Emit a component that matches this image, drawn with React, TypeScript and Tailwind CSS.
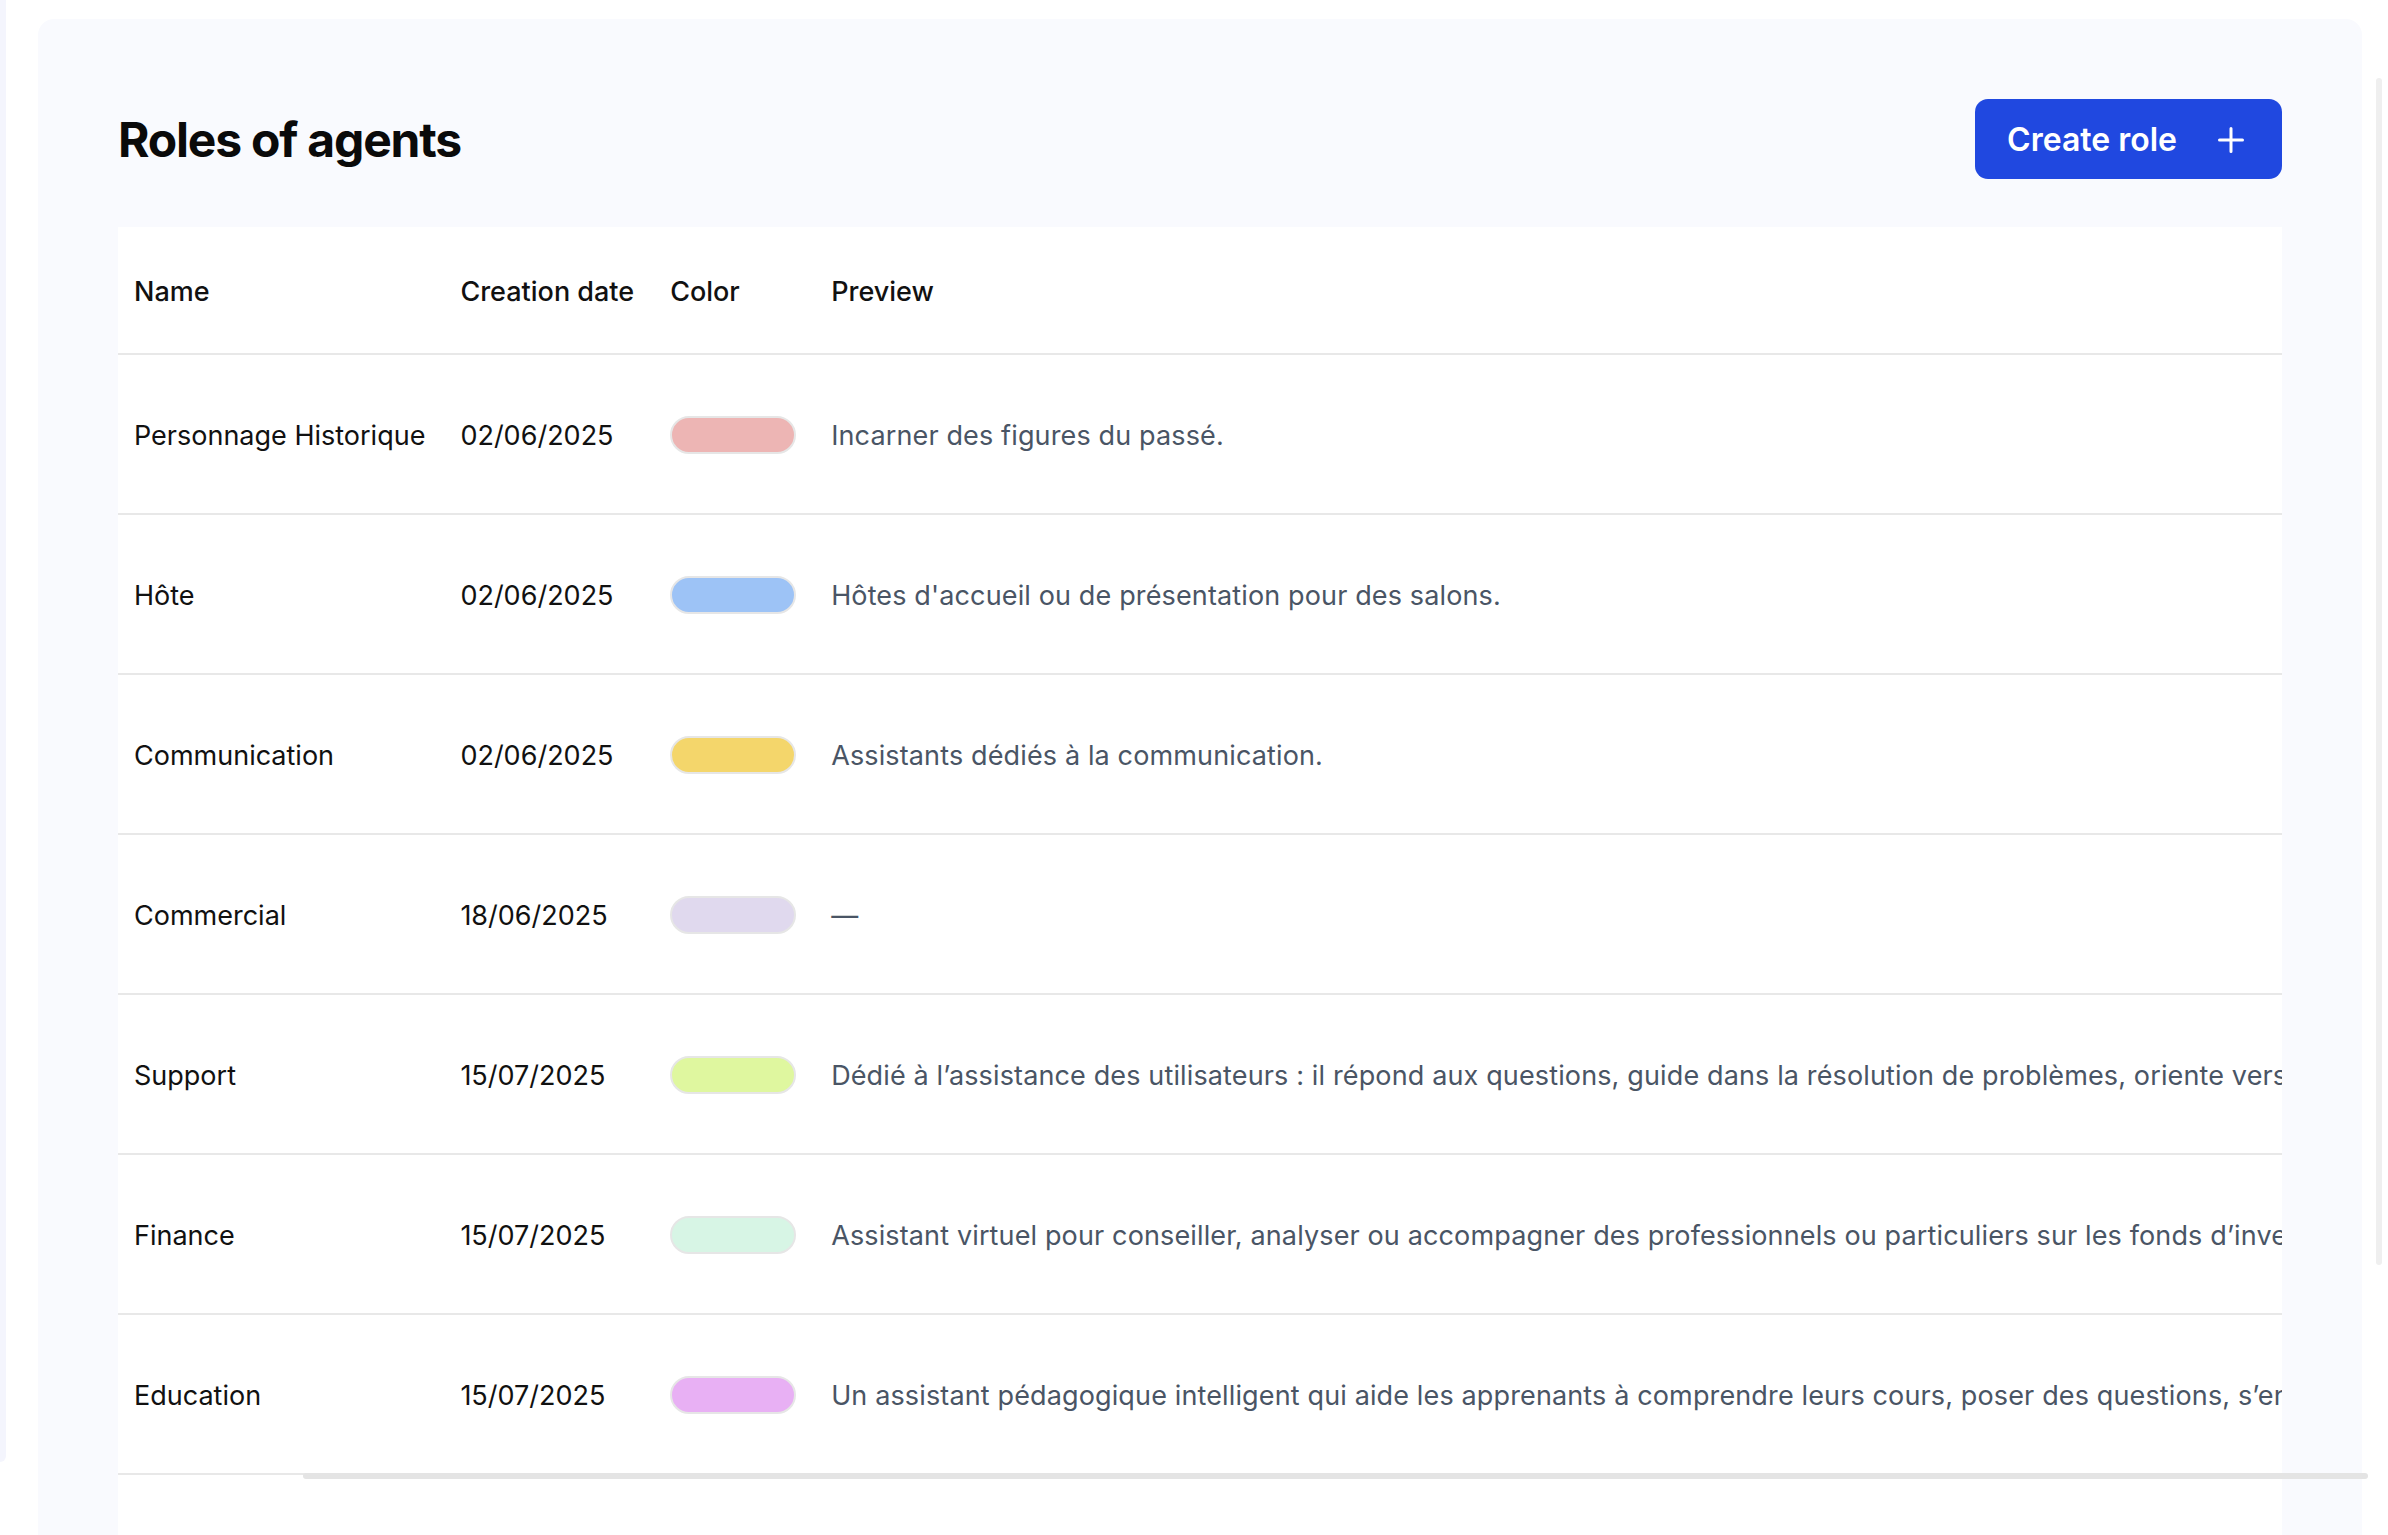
import React from 'react';

interface Role {
  name: string;
  date: string;
  color: string;
  preview: string;
}

const roles: Role[] = [
  { name: 'Personnage Historique', date: '02/06/2025', color: 'bg-[#edb5b4]', preview: 'Incarner des figures du passé.' },
  { name: 'Hôte', date: '02/06/2025', color: 'bg-[#9dc3f6]', preview: "Hôtes d'accueil ou de présentation pour des salons." },
  { name: 'Communication', date: '02/06/2025', color: 'bg-[#f4d66b]', preview: 'Assistants dédiés à la communication.' },
  { name: 'Commercial', date: '18/06/2025', color: 'bg-[#e0d9ee]', preview: '—' },
  {
    name: 'Support',
    date: '15/07/2025',
    color: 'bg-[#dff79f]',
    preview:
      'Dédié à l’assistance des utilisateurs : il répond aux questions, guide dans la résolution de problèmes, oriente vers les bonnes ressources et facilite l’accès aux services.',
  },
  {
    name: 'Finance',
    date: '15/07/2025',
    color: 'bg-[#d7f5e5]',
    preview:
      'Assistant virtuel pour conseiller, analyser ou accompagner des professionnels ou particuliers sur les fonds d’investissement.',
  },
  {
    name: 'Education',
    date: '15/07/2025',
    color: 'bg-[#e8b0f4]',
    preview:
      'Un assistant pédagogique intelligent qui aide les apprenants à comprendre leurs cours, poser des questions, s’entraîner et progresser à leur rythme.',
  },
];

const headers = [
  { label: 'Name', pad: 'pl-4 pr-[19px]' },
  { label: 'Creation date', pad: 'pl-4 pr-[20px]' },
  { label: 'Color', pad: 'pl-4 pr-[19px]' },
  { label: 'Preview', pad: 'px-4' },
];

const PlusIcon = () => (
  <svg width="26" height="26" viewBox="0 0 26 26" fill="none">
    <path d="M13 1.5v23M1.5 13h23" stroke="white" strokeWidth="3" strokeLinecap="round" />
  </svg>
);

export default function App() {
  return (
    <div className="relative flex h-[1535px] overflow-hidden bg-white font-['Inter',sans-serif]">
      {/* sidebar edge */}
      <div className="w-[6px] h-[1462px] shrink-0 bg-[#f4f5fd] rounded-br-[16px]" />

      {/* main panel */}
      <div className="ml-[32px] mt-[19px] w-[2324px] shrink-0 flex flex-col bg-[#f9fafe] rounded-t-[16px] px-[80px] pt-[80px]">
        <div className="flex items-center justify-between h-[80px]">
          <h1 className="pt-[1px] text-[48px] font-bold text-[#0a0a0a] tracking-[-0.025em] leading-none">Roles of agents</h1>
          <button className="flex items-center h-[80px] gap-[41px] pl-[32px] pr-[38px] pt-[2px] rounded-[13px] bg-[#2048e0] text-white text-[32px] font-semibold">
            <span>Create role</span>
            <PlusIcon />
          </button>
        </div>

        <div className="mt-[48px] flex-1 bg-white overflow-hidden">
          <table className="border-separate border-spacing-0 whitespace-nowrap text-[27px] text-left">
            <thead>
              <tr>
                {headers.map((h) => (
                  <th key={h.label} className="p-0 font-medium text-[#111] border-b-2 border-[#e8e8e8]">
                    <div className={`h-[126px] flex items-center pt-[4px] ${h.pad}`}>{h.label}</div>
                  </th>
                ))}
              </tr>
            </thead>
            <tbody>
              {roles.map((r) => (
                <tr key={r.name}>
                  <td className="p-0 border-b-2 border-[#e8e8e8] text-[#111]">
                    <div className="h-[158px] flex items-center pt-[4px] pl-4 pr-[19px]">{r.name}</div>
                  </td>
                  <td className="p-0 border-b-2 border-[#e8e8e8] text-[#111]">
                    <div className="h-[158px] flex items-center pt-[4px] pl-4 pr-[20px]">{r.date}</div>
                  </td>
                  <td className="p-0 border-b-2 border-[#e8e8e8]">
                    <div className="h-[158px] flex items-center pt-[2px] pl-4 pr-[19px]">
                      <span className={`block w-[126px] h-[38px] rounded-full border-2 border-[#e6e6e6] ${r.color}`} />
                    </div>
                  </td>
                  <td className="p-0 border-b-2 border-[#e8e8e8] text-gray-600">
                    <div className="h-[158px] flex items-center pt-[4px] px-4 tracking-[0.005em]">{r.preview}</div>
                  </td>
                </tr>
              ))}
            </tbody>
          </table>
        </div>
      </div>

      {/* overlay scrollbars */}
      <div className="absolute left-[2376px] top-[78px] w-[6px] h-[1187px] rounded-full bg-[#efefef]" />
      <div className="absolute left-[303px] top-[1473px] w-[2065px] h-[6px] rounded-full bg-[#e4e4e4]" />
    </div>
  );
}
